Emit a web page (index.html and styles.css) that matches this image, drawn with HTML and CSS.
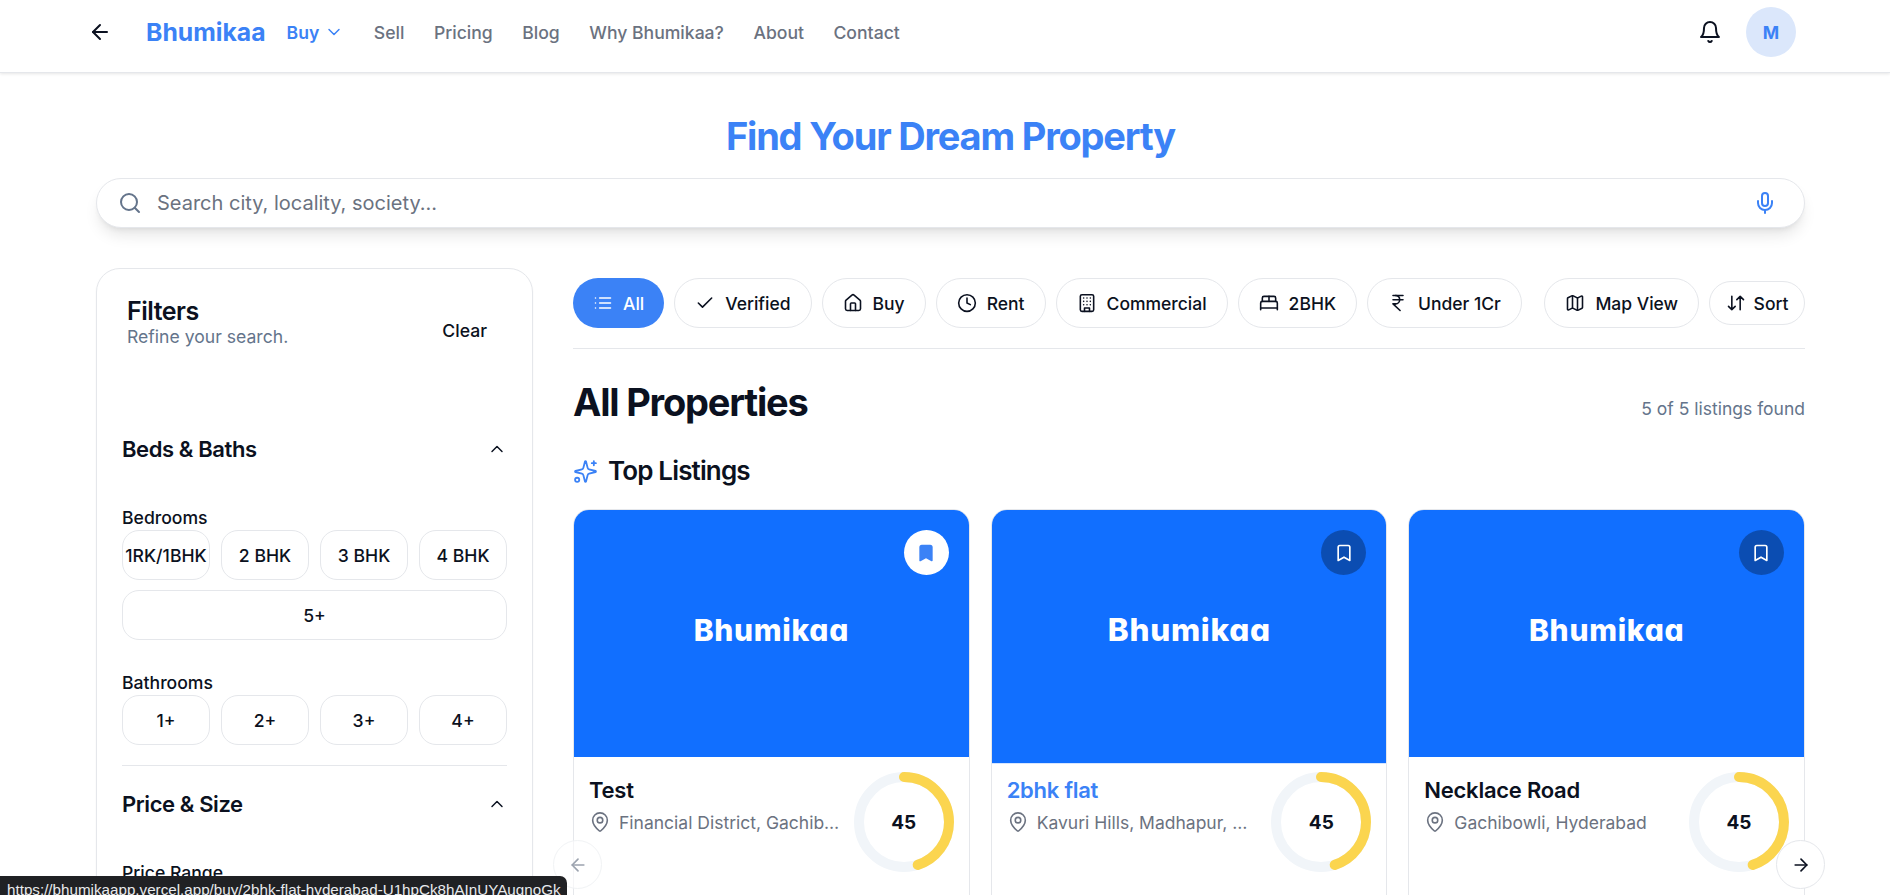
FILE: index.html
```html
<!DOCTYPE html>
<html lang="en">
<head>
    <meta charset="UTF-8">
    <meta name="viewport" content="width=device-width, initial-scale=1.0">
    <title>Bhumikaa - Buy</title>
    <link rel="stylesheet" href="styles.css">
</head>
<body>
    <!-- icon sprite -->
    <svg class="sprite" aria-hidden="true">
        <symbol id="i-arrow-left" viewBox="0 0 24 24"><path d="m12 19-7-7 7-7"/><path d="M19 12H5"/></symbol>
        <symbol id="i-arrow-right" viewBox="0 0 24 24"><path d="M5 12h14"/><path d="m12 5 7 7-7 7"/></symbol>
        <symbol id="i-chevron-down" viewBox="0 0 24 24"><path d="m6 9 6 6 6-6"/></symbol>
        <symbol id="i-chevron-up" viewBox="0 0 24 24"><path d="m18 15-6-6-6 6"/></symbol>
        <symbol id="i-bell" viewBox="0 0 24 24"><path d="M6 8a6 6 0 0 1 12 0c0 7 3 9 3 9H3s3-2 3-9"/><path d="M10.3 21a1.94 1.94 0 0 0 3.4 0"/></symbol>
        <symbol id="i-search" viewBox="0 0 24 24"><circle cx="11" cy="11" r="8"/><path d="m21 21-4.3-4.3"/></symbol>
        <symbol id="i-mic" viewBox="0 0 24 24"><path d="M12 2a3 3 0 0 0-3 3v7a3 3 0 0 0 6 0V5a3 3 0 0 0-3-3Z"/><path d="M19 10v2a7 7 0 0 1-14 0v-2"/><path d="M12 19v3"/></symbol>
        <symbol id="i-list" viewBox="0 0 24 24"><path d="M3 12h.01M3 18h.01M3 6h.01M8 12h13M8 18h13M8 6h13"/></symbol>
        <symbol id="i-check" viewBox="0 0 24 24"><path d="M20 6 9 17l-5-5"/></symbol>
        <symbol id="i-house" viewBox="0 0 24 24"><path d="M15 21v-8a1 1 0 0 0-1-1h-4a1 1 0 0 0-1 1v8"/><path d="M3 10a2 2 0 0 1 .709-1.528l7-5.999a2 2 0 0 1 2.582 0l7 5.999A2 2 0 0 1 21 10v9a2 2 0 0 1-2 2H5a2 2 0 0 1-2-2z"/></symbol>
        <symbol id="i-clock" viewBox="0 0 24 24"><circle cx="12" cy="12" r="10"/><path d="M12 6v6l4 2"/></symbol>
        <symbol id="i-building" viewBox="0 0 24 24"><rect x="4" y="2" width="16" height="20" rx="2"/><path d="M9 22v-4h6v4"/><path d="M8 6h.01M16 6h.01M12 6h.01M12 10h.01M12 14h.01M16 10h.01M16 14h.01M8 10h.01M8 14h.01"/></symbol>
        <symbol id="i-bed" viewBox="0 0 24 24"><path d="M2 20v-8a2 2 0 0 1 2-2h16a2 2 0 0 1 2 2v8"/><path d="M4 10V6a2 2 0 0 1 2-2h12a2 2 0 0 1 2 2v4"/><path d="M12 4v6"/><path d="M2 18h20"/></symbol>
        <symbol id="i-rupee" viewBox="0 0 24 24"><path d="M6 3h12M6 8h12M6 13l8.5 8M6 13h3"/><path d="M9 13c6.667 0 6.667-10 0-10"/></symbol>
        <symbol id="i-map" viewBox="0 0 24 24"><path d="M14.106 5.553a2 2 0 0 0 1.788 0l3.659-1.83A1 1 0 0 1 21 4.619v12.764a1 1 0 0 1-.553.894l-4.553 2.277a2 2 0 0 1-1.788 0l-4.212-2.106a2 2 0 0 0-1.788 0l-3.659 1.83A1 1 0 0 1 3 19.381V6.618a1 1 0 0 1 .553-.894l4.553-2.277a2 2 0 0 1 1.788 0z"/><path d="M15 5.764v15M9 3.236v15"/></symbol>
        <symbol id="i-sort" viewBox="0 0 24 24"><path d="m3 16 4 4 4-4M7 20V4M21 8l-4-4-4 4M17 4v16"/></symbol>
        <symbol id="i-sparkles" viewBox="0 0 24 24"><path d="M9.937 15.5A2 2 0 0 0 8.5 14.063l-6.135-1.582a.5.5 0 0 1 0-.962L8.5 9.936A2 2 0 0 0 9.937 8.5l1.582-6.135a.5.5 0 0 1 .963 0L14.063 8.5A2 2 0 0 0 15.5 9.937l6.135 1.581a.5.5 0 0 1 0 .964L15.5 14.063a2 2 0 0 0-1.437 1.437l-1.582 6.135a.5.5 0 0 1-.963 0z"/><path d="M20 2v4M22 4h-4"/><circle cx="4" cy="20" r="2"/></symbol>
        <symbol id="i-bookmark" viewBox="0 0 24 24"><path d="m19 21-7-4-7 4V5a2 2 0 0 1 2-2h10a2 2 0 0 1 2 2v16z"/></symbol>
        <symbol id="i-pin" viewBox="0 0 24 24"><path d="M20 10c0 4.993-5.539 10.193-7.399 11.799a1 1 0 0 1-1.202 0C9.539 20.193 4 14.993 4 10a8 8 0 0 1 16 0"/><circle cx="12" cy="10" r="3"/></symbol>
    </svg>

    <header class="topbar">
        <button class="back-btn"><svg class="icon"><use href="#i-arrow-left"/></svg></button>
        <a class="logo">Bhumikaa</a>
        <nav class="nav">
            <a class="nav-link active">Buy <svg class="icon-sm"><use href="#i-chevron-down"/></svg></a>
            <a class="nav-link">Sell</a>
            <a class="nav-link">Pricing</a>
            <a class="nav-link">Blog</a>
            <a class="nav-link">Why Bhumikaa?</a>
            <a class="nav-link">About</a>
            <a class="nav-link">Contact</a>
        </nav>
        <div class="topbar-right">
            <button class="bell-btn"><svg class="icon"><use href="#i-bell"/></svg></button>
            <div class="avatar">M</div>
        </div>
    </header>

    <section class="hero">
        <h1>Find Your Dream Property</h1>
        <div class="search-bar">
            <svg class="icon search-icon"><use href="#i-search"/></svg>
            <span class="search-text">Search city, locality, society...</span>
            <svg class="icon mic-icon"><use href="#i-mic"/></svg>
        </div>
    </section>

    <div class="layout">
        <aside class="filters">
            <div class="filters-head">
                <div>
                    <h2>Filters</h2>
                    <p>Refine your search.</p>
                </div>
                <button class="clear-btn">Clear</button>
            </div>

            <div class="filter-title first">
                <h3>Beds &amp; Baths</h3>
                <svg class="icon-sm"><use href="#i-chevron-up"/></svg>
            </div>
            <div class="filter-label">Bedrooms</div>
            <div class="option-grid">
                <button class="option tight">1RK/1BHK</button>
                <button class="option">2 BHK</button>
                <button class="option">3 BHK</button>
                <button class="option">4 BHK</button>
                <button class="option wide">5+</button>
            </div>
            <div class="filter-label second">Bathrooms</div>
            <div class="option-grid">
                <button class="option">1+</button>
                <button class="option">2+</button>
                <button class="option">3+</button>
                <button class="option">4+</button>
            </div>
            <div class="filter-divider"></div>
            <div class="filter-title">
                <h3>Price &amp; Size</h3>
                <svg class="icon-sm"><use href="#i-chevron-up"/></svg>
            </div>
            <div class="filter-label">Price Range</div>
        </aside>

        <main class="results">
            <div class="chips-row">
                <div class="chips">
                    <button class="chip active"><svg class="icon"><use href="#i-list"/></svg>All</button>
                    <button class="chip"><svg class="icon"><use href="#i-check"/></svg>Verified</button>
                    <button class="chip"><svg class="icon"><use href="#i-house"/></svg>Buy</button>
                    <button class="chip"><svg class="icon"><use href="#i-clock"/></svg>Rent</button>
                    <button class="chip"><svg class="icon"><use href="#i-building"/></svg>Commercial</button>
                    <button class="chip"><svg class="icon"><use href="#i-bed"/></svg>2BHK</button>
                    <button class="chip"><svg class="icon"><use href="#i-rupee"/></svg>Under 1Cr</button>
                </div>
                <div class="chips">
                    <button class="chip"><svg class="icon"><use href="#i-map"/></svg>Map View</button>
                    <button class="chip small"><svg class="icon"><use href="#i-sort"/></svg>Sort</button>
                </div>
            </div>

            <div class="results-head">
                <h2>All Properties</h2>
                <span>5 of 5 listings found</span>
            </div>

            <h3 class="section-title"><svg class="icon-lg"><use href="#i-sparkles"/></svg>Top Listings</h3>

            <div class="carousel">
                <button class="arrow arrow-prev"><svg class="icon"><use href="#i-arrow-left"/></svg></button>

                <article class="card">
                    <div class="card-image">
                        <div class="card-photo">Bhumikaa</div>
                        <button class="save saved"><svg class="icon"><use href="#i-bookmark"/></svg></button>
                    </div>
                    <div class="card-body">
                        <div class="card-info">
                            <h4>Test</h4>
                            <p class="place"><svg class="icon"><use href="#i-pin"/></svg><span>Financial District, Gachibowli, Hyderabad</span></p>
                        </div>
                        <div class="score">
                            <svg viewBox="0 0 100 100"><circle class="track" cx="50" cy="50" r="45"/><circle class="value" cx="50" cy="50" r="45"/></svg>
                            <span>45</span>
                        </div>
                    </div>
                </article>

                <article class="card hovered">
                    <div class="card-image">
                        <div class="card-photo">Bhumikaa</div>
                        <button class="save"><svg class="icon"><use href="#i-bookmark"/></svg></button>
                    </div>
                    <div class="card-body">
                        <div class="card-info">
                            <h4>2bhk flat</h4>
                            <p class="place"><svg class="icon"><use href="#i-pin"/></svg><span>Kavuri Hills, Madhapur, Hyderabad</span></p>
                        </div>
                        <div class="score">
                            <svg viewBox="0 0 100 100"><circle class="track" cx="50" cy="50" r="45"/><circle class="value" cx="50" cy="50" r="45"/></svg>
                            <span>45</span>
                        </div>
                    </div>
                </article>

                <article class="card">
                    <div class="card-image">
                        <div class="card-photo">Bhumikaa</div>
                        <button class="save"><svg class="icon"><use href="#i-bookmark"/></svg></button>
                    </div>
                    <div class="card-body">
                        <div class="card-info">
                            <h4>Necklace Road</h4>
                            <p class="place"><svg class="icon"><use href="#i-pin"/></svg><span>Gachibowli, Hyderabad</span></p>
                        </div>
                        <div class="score">
                            <svg viewBox="0 0 100 100"><circle class="track" cx="50" cy="50" r="45"/><circle class="value" cx="50" cy="50" r="45"/></svg>
                            <span>45</span>
                        </div>
                    </div>
                </article>

                <button class="arrow arrow-next"><svg class="icon"><use href="#i-arrow-right"/></svg></button>
            </div>
        </main>
    </div>

    <div class="status-link">https://bhumikaapp.vercel.app/buy/2bhk-flat-hyderabad-U1hpCk8hAInUYAugnoGk</div>
</body>
</html>
```

FILE: styles.css
```css
* {
    box-sizing: border-box;
}

html, body {
    height: 100%;
    overflow: hidden;
}

body {
    margin: 0;
    background: #fff;
    color: #0b1120;
    font-family: 'Inter', 'Liberation Sans', sans-serif;
}

button {
    font-family: inherit;
    background: none;
    border: none;
    color: inherit;
    padding: 0;
}

h1, h2, h3, h4, p {
    margin: 0;
}

.sprite {
    display: none;
}

.icon, .icon-sm, .icon-lg {
    width: 24px;
    height: 24px;
    flex-shrink: 0;
    fill: none;
    stroke: currentColor;
    stroke-width: 2;
    stroke-linecap: round;
    stroke-linejoin: round;
}

.icon-sm {
    width: 20px;
    height: 20px;
    stroke-width: 1.75;
}

.icon-lg {
    width: 25px;
    height: 25px;
    stroke-width: 1.75;
}

/* top bar */
.topbar {
    height: 73px;
    display: flex;
    align-items: center;
    padding: 0 94px 8px 88px;
    background: #fff;
    border-bottom: 1px solid #e5e7eb;
    box-shadow: 0 1px 3px rgba(0,0,0,0.1);
}

.back-btn {
    display: flex;
    margin-right: 34px;
}

.logo {
    color: #3b82f6;
    font-size: 24.75px;
    font-weight: 700;
    margin-right: 21px;
}

.nav {
    display: flex;
    align-items: center;
    gap: 29.5px;
}

.nav-link {
    display: flex;
    align-items: center;
    gap: 5px;
    color: #6b7280;
    font-size: 17.6px;
    font-weight: 500;
}

.nav-link.active {
    color: #3b82f6;
    font-weight: 600;
}

.topbar-right {
    margin-left: auto;
    display: flex;
    align-items: center;
    gap: 11px;
}

.bell-btn {
    width: 50px;
    height: 50px;
    display: flex;
    align-items: center;
    justify-content: center;
}

.avatar {
    width: 50px;
    height: 50px;
    border-radius: 50%;
    background: #dbe7fb;
    color: #3b82f6;
    font-size: 17.6px;
    font-weight: 700;
    display: flex;
    align-items: center;
    justify-content: center;
}

/* search */
.hero {
    padding: 41px 85px 0 96px;
}

.hero h1 {
    text-align: center;
    color: #3b82f6;
    font-size: 38px;
    line-height: 44px;
    font-weight: 700;
    letter-spacing: -1.2px;
}

.search-bar {
    height: 50px;
    margin-top: 20px;
    display: flex;
    align-items: center;
    padding: 0 27px 0 21px;
    border: 1px solid #e5e7eb;
    border-radius: 25px;
    background: #fff;
    box-shadow: 0 10px 15px -3px rgba(0,0,0,0.1), 0 4px 6px -4px rgba(0,0,0,0.1);
}

.search-icon {
    color: #64748b;
}

.search-text {
    margin-left: 15px;
    color: #6b7280;
    font-size: 20px;
}

.mic-icon {
    margin-left: auto;
    color: #3b82f6;
}

/* page columns */
.layout {
    display: grid;
    grid-template-columns: 437px 1fr;
    gap: 40px;
    padding: 40px 85px 0 96px;
}

/* filters */
.filters {
    height: 720px;
    padding: 26px 25px;
    border: 1px solid #e5e7eb;
    border-radius: 24px;
    box-shadow: 0 1px 2px rgba(0,0,0,0.05);
}

.filters-head {
    display: flex;
    justify-content: space-between;
    align-items: center;
    padding: 0 20px 0 5px;
}

.filters-head h2 {
    font-size: 25px;
    line-height: 32px;
    font-weight: 600;
    letter-spacing: -0.5px;
}

.filters-head p {
    color: #64748b;
    font-size: 17.6px;
    line-height: 20px;
}

.clear-btn {
    margin-top: 18px;
    font-size: 17.6px;
    font-weight: 500;
}

.filter-title {
    display: flex;
    justify-content: space-between;
    align-items: center;
    margin-top: 24px;
}

.filter-title.first {
    margin-top: 88px;
}

.filter-title h3 {
    font-size: 22px;
    line-height: 28px;
    font-weight: 600;
    letter-spacing: -0.4px;
}

.filter-label {
    margin-top: 43px;
    font-size: 17.6px;
    line-height: 24px;
    font-weight: 500;
}

.filter-label.second {
    margin-top: 31px;
}

.option-grid {
    display: grid;
    grid-template-columns: repeat(4, 1fr);
    gap: 10px 11px;
}

.option {
    height: 50px;
    border: 1px solid #e5e7eb;
    border-radius: 17px;
    font-size: 17.6px;
    font-weight: 500;
    white-space: nowrap;
}

.option.wide {
    grid-column: 1 / -1;
}

.filter-divider {
    height: 1px;
    margin-top: 20px;
    background: #e5e7eb;
}

/* results */
.chips-row {
    display: flex;
    justify-content: space-between;
    align-items: center;
    padding-bottom: 20px;
    border-bottom: 1px solid #e5e7eb;
    margin-top: 10px;
}

.chips {
    display: flex;
    align-items: center;
    gap: 10px;
}

.chip {
    height: 50px;
    display: flex;
    align-items: center;
    gap: 10px;
    padding: 0 20px;
    border: 1px solid #e5e7eb;
    border-radius: 25px;
    font-size: 17.5px;
    font-weight: 500;
    white-space: nowrap;
}

.chip svg {
    width: 20px;
    height: 20px;
    stroke-width: 1.9;
}

.chip.active {
    background: #3b82f6;
    border: none;
    color: #fff;
}

.chip.small {
    height: 44px;
    padding: 0 15.5px;
    gap: 8px;
}

.results-head {
    display: flex;
    justify-content: space-between;
    align-items: center;
    margin-top: 29px;
}

.results-head h2 {
    font-size: 38px;
    line-height: 48px;
    font-weight: 700;
    letter-spacing: -1.2px;
}

.results-head span {
    color: #64748b;
    font-size: 17.5px;
    margin-top: 12px;
}

.section-title {
    display: flex;
    align-items: center;
    gap: 10px;
    margin-top: 29px;
    font-size: 26px;
    line-height: 32px;
    font-weight: 600;
    letter-spacing: -0.85px;
}

.section-title svg {
    color: #3b82f6;
}

/* listing cards */
.carousel {
    position: relative;
    display: grid;
    grid-template-columns: repeat(3, 1fr);
    gap: 21px;
    margin-top: 22px;
}

.card {
    height: 420px;
    border: 1px solid #e5e7eb;
    border-radius: 16px;
    overflow: hidden;
    background: #fff;
}

.card-image {
    position: relative;
    height: 247px;
}

.card-photo {
    height: 100%;
    padding-bottom: 8px;
    display: flex;
    align-items: center;
    justify-content: center;
    background: #116fff;
    color: #fff;
    font-size: 30px;
    font-weight: 800;
    letter-spacing: 0.7px;
    font-feature-settings: "cv11";
}

.hovered .card-photo {
    transform: scale(1.05);
}

.save {
    position: absolute;
    top: 20px;
    right: 20px;
    width: 45px;
    height: 45px;
    border-radius: 50%;
    display: flex;
    align-items: center;
    justify-content: center;
    background: rgba(0,0,0,0.3);
    color: #fff;
}

.save svg {
    width: 20px;
    height: 20px;
}

.save.saved {
    background: #fff;
    color: #3b82f6;
}

.save.saved svg {
    fill: currentColor;
}

.card-body {
    display: flex;
    justify-content: space-between;
    gap: 12px;
    padding: 15px 15px 0 15px;
}

.card-info {
    min-width: 0;
    flex: 1;
    padding-top: 3px;
}

.card-info h4 {
    font-size: 22px;
    line-height: 30px;
    font-weight: 600;
    letter-spacing: -0.25px;
}

.hovered .card-info h4 {
    color: #3b82f6;
}

.place {
    display: flex;
    align-items: center;
    gap: 8px;
    margin-top: 6px;
    color: #6b7280;
    font-size: 17.5px;
}

.place svg {
    width: 22px;
    height: 22px;
    stroke-width: 1.75;
}

.place span {
    overflow: hidden;
    text-overflow: ellipsis;
    white-space: nowrap;
}

.score {
    position: relative;
    width: 100px;
    height: 100px;
    flex-shrink: 0;
    display: flex;
    align-items: center;
    justify-content: center;
    font-size: 19px;
    font-weight: 700;
}

.score svg {
    position: absolute;
    inset: 0;
    transform: rotate(-90deg);
}

.score circle {
    fill: none;
    stroke-width: 10;
}

.track {
    stroke: #f1f5f9;
}

.value {
    stroke: #fbd54f;
    stroke-linecap: round;
    stroke-dasharray: 127.2 282.7;
}

.arrow {
    position: absolute;
    top: 331px;
    width: 49px;
    height: 49px;
    border: 1px solid #e5e7eb;
    border-radius: 50%;
    display: flex;
    align-items: center;
    justify-content: center;
    background: #fff;
}

.arrow svg {
    width: 20px;
    height: 20px;
}

.arrow-prev {
    left: -20px;
    color: #9ca3af;
    background: rgba(255,255,255,0.6);
    border-color: #f1f3f5;
}

.arrow-next {
    right: -20px;
}

/* browser link preview */
.status-link {
    position: fixed;
    left: 0;
    bottom: 0;
    width: 567px;
    height: 19px;
    padding: 4px 0 0 7px;
    background: #202124;
    color: #e8eaed;
    font-family: 'Liberation Sans', sans-serif;
    font-size: 15.2px;
    line-height: 20px;
    border-top-right-radius: 7px;
    overflow: hidden;
    white-space: nowrap;
}
```
